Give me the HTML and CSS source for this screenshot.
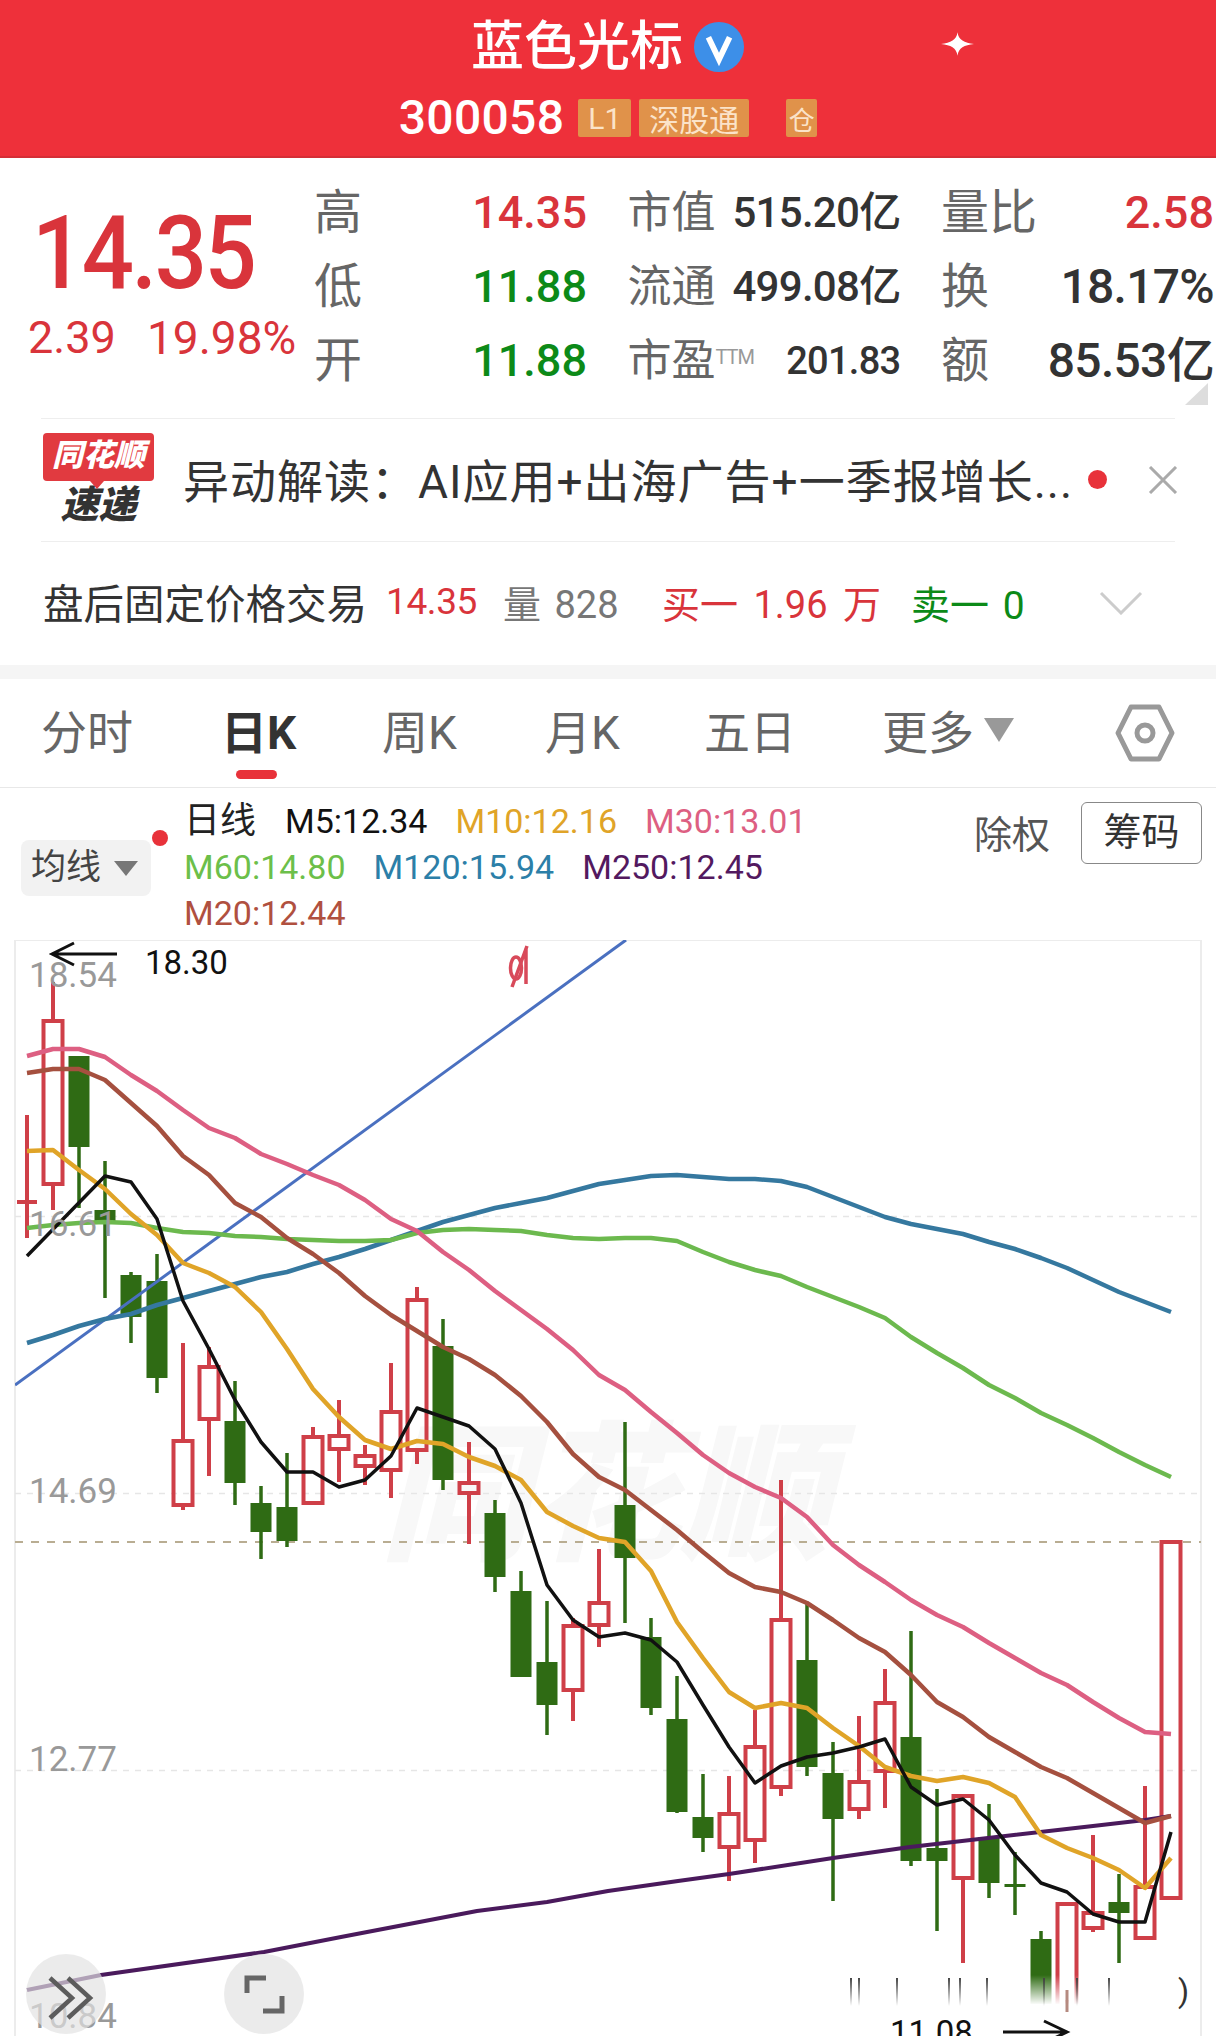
FILE: index.html
```html
<!DOCTYPE html>
<html lang="zh">
<head>
<meta charset="utf-8">
<title>蓝色光标 300058</title>
<link rel="stylesheet" href="styles.css">
</head>
<body>
<div class="page">
  <header class="top">
    <div class="title-row">
      <span class="title">蓝色光标</span>
      <svg class="vbadge" viewBox="0 0 54 54"><circle cx="27" cy="27" r="26" fill="#3d8fe8"/><path d="M16 17l11 23 11-23" fill="none" stroke="#fff" stroke-width="6"/></svg>
    </div>
    <div class="code-row">
      <span class="code">300058</span>
      <span class="tag tag-l1">L1</span>
      <span class="tag tag-sgt">深股通</span>
      <span class="tag tag-cang">仓</span>
    </div>
    <svg class="sparkle" viewBox="0 0 34 24"><path d="M17 0C18 8 24 11 34 12C24 13 18 16 17 24C16 16 10 13 0 12C10 11 16 8 17 0Z" fill="#fff"/></svg>
  </header>

  <section class="quote">
    <div class="price-block">
      <div class="price">14.35</div>
      <div class="change"><span class="delta">2.39</span><span class="pct">19.98%</span></div>
    </div>
    <div class="stats">
      <div class="stat"><span class="lbl one">高</span><span class="val red">14.35</span></div>
      <div class="stat"><span class="lbl two">市值</span><span class="val dark">515.20亿</span></div>
      <div class="stat"><span class="lbl">量比</span><span class="val red">2.58</span></div>
      <div class="stat"><span class="lbl one">低</span><span class="val green">11.88</span></div>
      <div class="stat"><span class="lbl two">流通</span><span class="val dark">499.08亿</span></div>
      <div class="stat"><span class="lbl">换</span><span class="val dark big">18.17%</span></div>
      <div class="stat"><span class="lbl one">开</span><span class="val green">11.88</span></div>
      <div class="stat"><span class="lbl two">市盈<sup class="ttm">TTM</sup></span><span class="val dark small">201.83</span></div>
      <div class="stat"><span class="lbl">额</span><span class="val dark big">85.53亿</span></div>
    </div>
    <span class="corner"></span>
  </section>

  <section class="news">
    <div class="logo">
      <div class="logo-top">同花顺</div>
      <div class="logo-bot">速递</div>
    </div>
    <div class="news-text">异动解读：AI应用+出海广告+一季报增长...</div>
    <span class="news-dot"></span>
    <svg class="news-x" viewBox="0 0 30 28"><path d="M2 1l26 26M28 1L2 27" stroke="#aaa" stroke-width="3" fill="none"/></svg>
  </section>

  <section class="after">
    <span class="after-name">盘后固定价格交易</span>
    <span class="after-price">14.35</span>
    <span class="after-vol">量 828</span>
    <span class="after-buy">买一 1.96 万</span>
    <span class="after-sell">卖一 0</span>
    <svg class="chev" viewBox="0 0 44 24"><path d="M2 2l20 20L42 2" fill="none" stroke="#ccc" stroke-width="3"/></svg>
  </section>

  <div class="band"></div>

  <nav class="tabs">
    <span class="tab">分时</span>
    <span class="tab active">日K</span>
    <span class="tab">周K</span>
    <span class="tab">月K</span>
    <span class="tab">五日</span>
    <span class="tab more">更多<i class="tri"></i></span>
    <svg class="hex" viewBox="0 0 60 58"><path d="M16 3h28l13 26-13 26H16L3 29z" fill="none" stroke="#999" stroke-width="5" stroke-linejoin="round"/><circle cx="30" cy="29" r="8" fill="none" stroke="#999" stroke-width="5"/></svg>
  </nav>

  <section class="legend">
    <div class="ma-btn">均线<i class="tri-small"></i><span class="ma-dot"></span></div>
    <div class="ma-rows">
      <div class="ma-row"><span class="day">日线</span><span class="m5">M5:12.34</span><span class="m10">M10:12.16</span><span class="m30">M30:13.01</span></div>
      <div class="ma-row"><span class="m60">M60:14.80</span><span class="m120">M120:15.94</span><span class="m250">M250:12.45</span></div>
      <div class="ma-row"><span class="m20">M20:12.44</span></div>
    </div>
    <span class="chuquan">除权</span>
    <span class="chouma">筹码</span>
  </section>

  <section class="chart">
    <svg class="plot" viewBox="0 940 1216 1096" width="1216" height="1096">
      <defs>
        <linearGradient id="fade" x1="0" y1="0" x2="0" y2="1">
          <stop offset="0" stop-color="#fff" stop-opacity="0"/>
          <stop offset="0.85" stop-color="#fff"/>
        </linearGradient>
        <linearGradient id="tick" x1="0" y1="0" x2="0" y2="1">
          <stop offset="0" stop-color="#444"/>
          <stop offset="1" stop-color="#444" stop-opacity="0"/>
        </linearGradient>
        <clipPath id="plotclip"><rect x="15" y="940" width="1186" height="1096"/></clipPath>
      </defs>

      <rect class="frame" x="15" y="940" width="1186" height="1110"/>
      <text class="wm" x="380" y="1548">同花顺</text>

      <path class="grid" d="M15 1216.5H1201M15 1493.5H1201M15 1770.5H1201"/>
      <path class="last" d="M15 1542H1201"/>

      <g class="candle-up">
        <path class="wick" d="M27 1115V1238M17 1202H37M53 982V1021M53 1184V1210M183 1343V1441M183 1505V1510M209 1347V1367M209 1419V1476M313 1427V1437M339 1400V1436M339 1449V1482M365 1445V1456M365 1466V1485M391 1363V1412M391 1470V1498M417 1287V1300M417 1450V1464M469 1442V1483M469 1493V1544M573 1618V1626M573 1690V1721M599 1549V1603M599 1625V1647M729 1776V1814M729 1847V1881M755 1710V1747M755 1840V1863M781 1480V1620M781 1787V1796M859 1716V1782M859 1809V1819M885 1669V1703M885 1771V1808M963 1878V1963M1067 2000V2012M1093 1835V1913M1093 1928V1932M1145 1786V1887"/>
        <rect x="43.5" y="1021" width="19" height="163"/>
        <rect x="173.5" y="1441" width="19" height="64"/>
        <rect x="199.5" y="1367" width="19" height="52"/>
        <rect x="303.5" y="1437" width="19" height="66"/>
        <rect x="329.5" y="1436" width="19" height="13"/>
        <rect x="355.5" y="1456" width="19" height="10"/>
        <rect x="381.5" y="1412" width="19" height="58"/>
        <rect x="407.5" y="1300" width="19" height="150"/>
        <rect x="459.5" y="1483" width="19" height="10"/>
        <rect x="563.5" y="1626" width="19" height="64"/>
        <rect x="589.5" y="1603" width="19" height="22"/>
        <rect x="719.5" y="1814" width="19" height="33"/>
        <rect x="745.5" y="1747" width="19" height="93"/>
        <rect x="771.5" y="1620" width="19" height="167"/>
        <rect x="849.5" y="1782" width="19" height="27"/>
        <rect x="875.5" y="1703" width="19" height="68"/>
        <rect x="953.5" y="1796" width="19" height="82"/>
        <rect x="1057.5" y="1904" width="19" height="106"/>
        <rect x="1083.5" y="1913" width="19" height="15"/>
        <rect x="1135.5" y="1887" width="19" height="51"/>
        <rect x="1161.5" y="1542" width="19" height="356"/>
      </g>

      <g class="candle-down">
        <path class="wick" d="M79 1147V1208M105 1161V1298M131 1272V1343M157 1254V1393M235 1381V1505M261 1486V1559M287 1453V1547M443 1319V1490M495 1500V1592M521 1571V1591M547 1601V1735M625 1422V1623M651 1618V1715M677 1676V1813M703 1774V1852M807 1603V1776M833 1742V1901M911 1631V1866M937 1789V1931M989 1804V1898M1015 1852V1915M1041 1931V1939M1119 1874V1963"/>
        <rect x="68.5" y="1056" width="21" height="91"/>
        <rect x="94.5" y="1210" width="21" height="11"/>
        <rect x="120.5" y="1275" width="21" height="42"/>
        <rect x="146.5" y="1281" width="21" height="97"/>
        <rect x="224.5" y="1421" width="21" height="62"/>
        <rect x="250.5" y="1503" width="21" height="29"/>
        <rect x="276.5" y="1507" width="21" height="34"/>
        <rect x="432.5" y="1346" width="21" height="134"/>
        <rect x="484.5" y="1513" width="21" height="64"/>
        <rect x="510.5" y="1591" width="21" height="86"/>
        <rect x="536.5" y="1662" width="21" height="43"/>
        <rect x="614.5" y="1505" width="21" height="53"/>
        <rect x="640.5" y="1637" width="21" height="71"/>
        <rect x="666.5" y="1719" width="21" height="93"/>
        <rect x="692.5" y="1817" width="21" height="21"/>
        <rect x="796.5" y="1660" width="21" height="107"/>
        <rect x="822.5" y="1773" width="21" height="46"/>
        <rect x="900.5" y="1737" width="21" height="124"/>
        <rect x="926.5" y="1848" width="21" height="13"/>
        <rect x="978.5" y="1837" width="21" height="46"/>
        <rect x="1004.5" y="1884" width="21" height="3"/>
        <rect x="1030.5" y="1939" width="21" height="70"/>
        <rect x="1108.5" y="1902" width="21" height="11"/>
      </g>

      <rect x="848" y="1975" width="342" height="35" fill="url(#fade)"/>
      <rect x="848" y="2004" width="342" height="40" fill="#fff"/>
      <path class="ticks" d="M851 1978V2006M859 1978V2006M897 1978V2006M949 1978V2006M960 1978V2006M987 1978V2006M1044 1978V2006M1077 1978V2006M1109 1978V2006"/>
      <path class="wick-faded" d="M1067 1990V2012"/>
      <text class="paren" x="1178" y="2002">)</text>

      <g clip-path="url(#plotclip)">
        <path class="ln blue" d="M15 1385L626 940"/>
        <polyline class="ln purple" points="27,1990 101,1975 264,1952 341,1937 477,1911 547,1902 608,1891 678,1881 729,1874 833,1858 910,1847 988,1838 1093,1826 1145,1820 1171,1816"/>
        <polyline class="ln teal" points="27,1343 53,1335 79,1326 105,1319 131,1314 157,1305 183,1298 209,1291 235,1284 261,1277 287,1272 313,1264 339,1257 365,1249 391,1240 417,1231 443,1222 469,1215 495,1208 521,1203 547,1198 573,1191 599,1184 625,1180 651,1176 677,1175 703,1177 729,1179 755,1179 781,1181 807,1187 833,1197 859,1207 885,1217 911,1224 937,1229 963,1234 989,1242 1015,1249 1041,1258 1067,1268 1093,1280 1119,1292 1145,1302 1171,1312"/>
        <polyline class="ln lime" points="27,1228 53,1225 79,1223 105,1222 131,1223 157,1228 183,1232 209,1233 235,1236 261,1237 287,1239 313,1240 339,1241 365,1241 391,1240 417,1233 443,1230 469,1229 495,1230 521,1231 547,1235 573,1238 599,1239 625,1238 651,1238 677,1241 703,1252 729,1262 755,1270 781,1276 807,1287 833,1297 859,1307 885,1318 911,1337 937,1353 963,1368 989,1385 1015,1398 1041,1413 1067,1425 1093,1438 1119,1452 1145,1465 1171,1477"/>
        <polyline class="ln pink" points="27,1056 53,1049 79,1049 105,1057 131,1075 157,1091 183,1110 209,1128 235,1138 261,1154 287,1164 313,1175 339,1185 365,1200 391,1219 417,1231 443,1252 469,1270 495,1291 521,1310 547,1329 573,1350 599,1375 625,1390 651,1412 677,1433 703,1455 729,1473 755,1487 781,1498 807,1517 833,1545 859,1565 885,1582 911,1600 937,1615 963,1627 989,1643 1015,1658 1041,1673 1067,1685 1093,1702 1119,1718 1145,1732 1171,1734"/>
        <polyline class="ln brown" points="27,1073 53,1069 79,1069 105,1080 131,1103 157,1126 183,1156 209,1175 235,1203 261,1217 287,1238 313,1254 339,1273 365,1296 391,1315 417,1331 443,1347 469,1359 495,1375 521,1396 547,1422 573,1454 599,1477 625,1490 651,1510 677,1530 703,1552 729,1573 755,1587 781,1592 807,1603 833,1620 859,1638 885,1652 911,1675 937,1702 963,1717 989,1737 1015,1752 1041,1767 1067,1778 1093,1793 1119,1808 1145,1823 1171,1816"/>
        <polyline class="ln orange" points="27,1151 53,1150 79,1170 105,1189 131,1214 157,1235 183,1263 209,1273 235,1287 261,1312 287,1349 313,1389 339,1417 365,1440 391,1449 417,1441 443,1444 469,1457 495,1466 521,1480 547,1512 573,1526 599,1538 625,1542 651,1571 677,1622 703,1658 729,1692 755,1708 781,1703 807,1708 833,1728 859,1746 885,1767 911,1776 937,1781 963,1777 989,1783 1015,1797 1041,1835 1067,1848 1093,1858 1119,1870 1145,1888 1171,1858"/>
        <polyline class="ln black" points="27,1256 105,1176 131,1182 157,1219 183,1301 209,1349 235,1400 261,1442 287,1472 313,1472 339,1487 365,1480 391,1456 417,1408 443,1417 469,1426 495,1449 521,1503 547,1585 573,1620 599,1637 625,1633 651,1640 677,1662 703,1705 729,1747 755,1783 781,1766 807,1757 833,1753 859,1747 885,1739 911,1787 937,1805 963,1799 989,1820 1015,1855 1041,1883 1067,1892 1093,1914 1119,1922 1145,1922 1171,1832"/>
      </g>

      <text class="axis" x="29" y="987">18.54</text>
      <text class="axis" x="29" y="1236">16.61</text>
      <text class="axis" x="29" y="1503">14.69</text>
      <text class="axis" x="29" y="1771">12.77</text>
      <text class="axis" x="29" y="2028">10.84</text>

      <path class="note-line" d="M52 954H117M74 943L52 954L74 965"/>
      <text class="note" x="145" y="974">18.30</text>
      <text class="note" x="890" y="2044">11.08</text>
      <path class="note-line" d="M1003 2032H1066M1044 2021L1067 2032L1044 2043"/>

      <path class="sym" d="M526 948V984M527 946L512 987"/>
      <ellipse class="sym" cx="516" cy="968" rx="5.500" ry="11"/>
    </svg>

    <span class="fab fab-left">
      <svg viewBox="0 0 80 80" width="80" height="80"><path d="M24 24l22 20-22 20M42 24l22 20-22 20" fill="none" stroke="#5c5c5c" stroke-width="4.500"/></svg>
    </span>
    <span class="fab fab-right">
      <svg viewBox="0 0 80 80" width="80" height="80"><path d="M23 39V24H42M58 42V57H39" fill="none" stroke="#666" stroke-width="5"/></svg>
    </span>
  </section>
</div>
</body>
</html>
```
FILE: styles.css
```css
* { box-sizing: border-box; }
html, body { margin: 0; padding: 0; background: #fff; }
body { font-family: Roboto, "Noto Sans CJK SC", sans-serif; color: #333; }
.page { width: 1216px; height: 2036px; overflow: hidden; position: relative; }

.top { height: 158px; background: #ee303a; position: relative; color: #fff; border-bottom: 2px solid #d42e36; }
.title-row { display: flex; justify-content: center; align-items: center; gap: 10px; padding-top: 15px; height: 79px; }
.title { font-size: 53px; line-height: 64px; font-weight: 500; }
.vbadge { width: 52px; height: 54px; }
.sparkle { position: absolute; left: 941px; top: 32px; width: 33px; height: 24px; }
.code-row { display: flex; justify-content: center; align-items: center; gap: 8px; height: 44px; margin-top: 17px; }
.code { font-size: 48px; font-weight: 500; line-height: 44px; margin-right: 6px; letter-spacing: .3px; }
.tag { height: 38px; display: flex; align-items: center; justify-content: center; background: #e0924a; border-radius: 2px; font-size: 30px; color: #fbe3c9; overflow: hidden; }
.tag-l1 { width: 53px; }
.tag-sgt { width: 110px; }
.tag-cang { width: 31px; margin-left: 29px; font-size: 26px; }

.quote { display: flex; height: 260px; position: relative; }
.price-block { width: 317px; padding-top: 46px; }
.price { font-size: 92px; line-height: 100px; padding-left: 32px; color: #d9343b; font-weight: 500; letter-spacing: -2.5px; transform: scaleY(1.1); }
.change { display: flex; color: #d9343b; font-size: 45px; line-height: 54px; padding: 7px 0 0 28px; }
.delta { width: 119px; }
.pct { font-size: 46px; }
.stats { display: grid; grid-template-columns: 270px 270px 270px; column-gap: 43.5px; grid-auto-rows: 74px; padding-top: 18px; }
.stat { display: flex; justify-content: space-between; align-items: center; }
.lbl { font-size: 48px; color: #666; line-height: 60px; white-space: nowrap; margin-left: -3px; }
.lbl.two { font-size: 44px; }
.ttm { font-size: 20px; color: #999; vertical-align: 12px; line-height: 0; letter-spacing: -1px; }
.val { font-size: 45px; line-height: 60px; font-weight: 500; white-space: nowrap; }
.val.dark { font-size: 42px; letter-spacing: -.7px; }
.val.dark.big { font-size: 48px; }
.val.dark.small { font-size: 38px; }
.red { color: #d9343b; }
.green { color: #0c8a18; }
.corner { position: absolute; right: 8px; bottom: 13px; width: 0; height: 0; border-style: solid; border-width: 0 0 22px 23px; border-color: transparent transparent #ddd transparent; }

.news { display: flex; align-items: center; height: 124px; margin: 0 41px; border-top: 1px solid #eee; border-bottom: 1px solid #eee; position: relative; }
.logo { width: 113px; margin-left: 1px; display: flex; flex-direction: column; align-items: center; }
.logo-top { width: 111px; height: 48px; margin-top: -2px; background: #e13a40; border-radius: 4px; color: #fff; font-size: 31px; line-height: 46px; font-weight: 900; font-style: italic; text-align: center; position: relative; }
.logo-top::after { content: ""; position: absolute; left: 47px; bottom: -8px; border-style: solid; border-width: 8px 7px 0; border-color: #e13a40 transparent transparent; }
.logo-bot { color: #333; font-size: 38px; line-height: 40px; font-weight: 900; font-style: italic; margin-top: 4px; }
.news-text { font-size: 46px; color: #333; margin-left: 28px; margin-top: 3px; line-height: 60px; white-space: nowrap; letter-spacing: 1px; }
.news-dot { position: absolute; left: 1047px; top: 51px; width: 19px; height: 19px; border-radius: 50%; background: #e8323a; }
.news-x { position: absolute; left: 1107px; top: 47px; width: 30px; height: 28px; }

.after { display: flex; align-items: center; height: 123px; padding: 0 0 4px 43px; white-space: nowrap; }
.after-name { font-size: 40.5px; color: #333; width: 343px; }
.after-price { color: #d9343b; width: 117px; font-size: 37px; letter-spacing: -.4px; }
.after-vol { color: #777; width: 159px; font-size: 38px; word-spacing: 4px; }
.after-buy { color: #d9343b; width: 249px; font-size: 38px; word-spacing: 6px; }
.after-sell { color: #0c8a18; width: 188px; font-size: 39px; word-spacing: 4px; }
.chev { width: 44px; height: 24px; margin-top: 2px; }

.band { height: 14px; background: #f5f5f5; }

.tabs { display: grid; grid-template-columns: 180px 161px 163px 159px 178px 1fr 60px; align-items: center; height: 109px; padding: 0 41px 0 41px; border-bottom: 1px solid #e8e8e8; position: relative; }
.tab { font-size: 46px; color: #666; line-height: 60px; position: relative; white-space: nowrap; }
.tab.active { color: #333; font-weight: 700; }
.tab.active::after { content: ""; position: absolute; left: 15px; top: 67px; width: 41px; height: 9px; border-radius: 5px; background: #e8323a; }
.more { display: flex; align-items: center; }
.tri { margin: -6px 0 0 10px; border-style: solid; border-width: 24px 15px 0; border-color: #999 transparent transparent; }
.hex { width: 60px; height: 58px; }

.legend { display: flex; height: 152px; padding-left: 21px; position: relative; }
.ma-btn { width: 130px; height: 56px; margin-top: 52px; background: #f2f2f2; border-radius: 8px; font-size: 35px; line-height: 56px; padding-left: 10px; color: #444; display: flex; align-items: center; position: relative; }
.tri-small { margin-left: 13px; border-style: solid; border-width: 15px 12px 0; border-color: #777 transparent transparent; }
.ma-dot { position: absolute; left: 131px; top: -10px; width: 16px; height: 16px; border-radius: 50%; background: #e8323a; }
.ma-rows { margin-left: 33px; padding-top: 10px; width: 790px; }
.ma-row { display: flex; gap: 28px; font-size: 34px; height: 46px; line-height: 46px; white-space: nowrap; }
.day { color: #222; font-size: 36px; margin-right: 1px; }
.m5 { color: #111; }
.m10 { color: #e0a428; }
.m30 { color: #dd5f82; }
.m60 { color: #6cbf4a; }
.m120 { color: #2c7fa8; }
.m250 { color: #53195f; }
.m20 { color: #b0503f; }
.chuquan { font-size: 38px; color: #555; line-height: 50px; margin-top: 22px; width: 107px; }
.chouma { height: 62px; width: 121px; margin-top: 14px; border: 1px solid #888; border-radius: 6px; font-size: 38px; line-height: 58px; color: #333; text-align: center; }

.chart { position: relative; height: 1096px; }
.plot { display: block; }
.frame { fill: #fff; stroke: #ececec; stroke-width: 2; }
.wm { font-size: 150px; font-weight: 900; font-style: italic; fill: #f8f8f8; font-family: "Noto Sans CJK SC", sans-serif; }
.grid { stroke: #e6e6e6; stroke-width: 1.500; stroke-dasharray: 6 6; fill: none; }
.last { stroke: #b9ad92; stroke-width: 2; stroke-dasharray: 8 8; fill: none; }
.candle-up rect { fill: none; stroke: #cf3f48; stroke-width: 4; }
.candle-up .wick { fill: none; stroke: #cf3f48; stroke-width: 4; }
.candle-down rect { fill: #2f6b14; }
.candle-down .wick { fill: none; stroke: #2f6b14; stroke-width: 3.500; }
.ticks { stroke: url(#tick); stroke-width: 2; fill: none; }
.wick-faded { stroke: #b58a80; stroke-width: 3; fill: none; }
.paren { font-size: 32px; fill: #333; font-family: Roboto, sans-serif; }
.ln { fill: none; stroke-linejoin: round; }
.blue { stroke: #4a70c0; stroke-width: 3; }
.purple { stroke: #4a1a5c; stroke-width: 4; }
.teal { stroke: #35789f; stroke-width: 4.500; }
.lime { stroke: #6cb94e; stroke-width: 4.500; }
.pink { stroke: #dd5f82; stroke-width: 4.500; }
.brown { stroke: #a5503f; stroke-width: 4.500; }
.orange { stroke: #e0a428; stroke-width: 4.500; }
.black { stroke: #111; stroke-width: 3.500; }
.axis { font-size: 35px; fill: #999; font-family: Roboto, sans-serif; }
.note { font-size: 33px; fill: #111; font-family: Roboto, sans-serif; }
.note-line { fill: none; stroke: #111; stroke-width: 3; }
.sym { fill: none; stroke: #d84a5a; stroke-width: 3.500; }
.fab { position: absolute; width: 80px; height: 80px; border-radius: 50%; background: rgba(225, 225, 225, .68); top: 1014px; }
.fab svg { display: block; }
.fab-left { left: 26px; }
.fab-right { left: 224px; }
```
